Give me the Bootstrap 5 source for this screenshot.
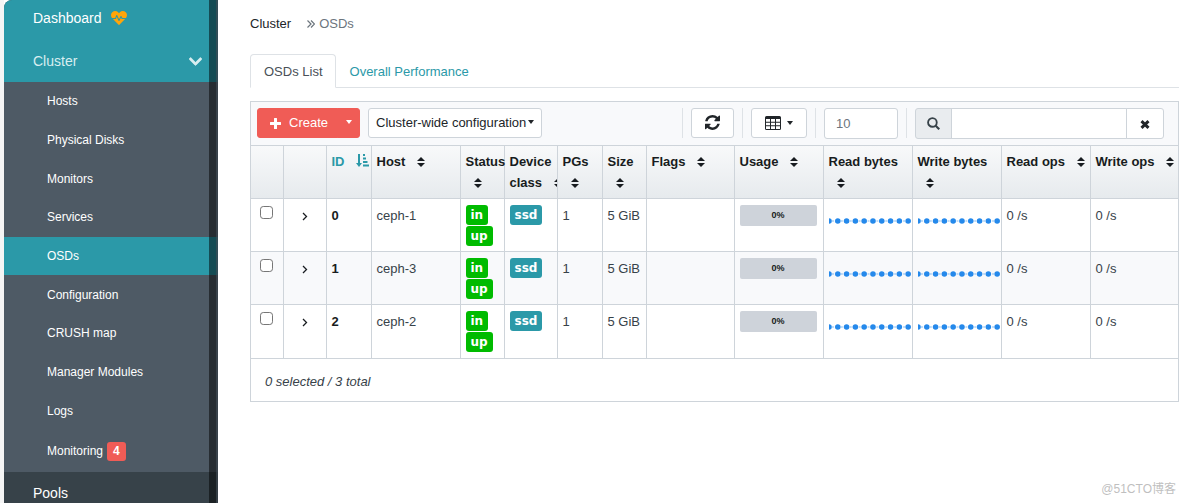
<!DOCTYPE html>
<html lang="en">
<head>
<meta charset="utf-8">
<meta name="viewport" content="width=device-width, initial-scale=1">
<title>OSDs</title>
<link href="https://cdn.jsdelivr.net/npm/bootstrap@5.3.0/dist/css/bootstrap.min.css" rel="stylesheet">
<style>
:root { --teal: #2b99a8; --line: #ced4da; --slate: #4e5a65; --coral: #f05c56; }
body { font: 13px/21px "Liberation Sans", Arial, sans-serif; color: #374249; background: #fff; }
a { text-decoration: none; }
svg { fill: currentColor; flex: none; }
.shell { height: 100vh; overflow: hidden; }
.gutter { flex: none; width: 4px; background: #f5f5f5; }
.side { width: 214px; background: #374249; border-top-left-radius: 8px; overflow: hidden; position: relative; }
.side a { color: #fff; }
.side-top { font-size: 14px; height: 42px; padding: 0 16px 0 29px; }
.side-first { height: 40px; padding-bottom: 4px; }
.teal-bg { background: var(--teal); }
.side .is-open { color: #d8eef0; }
.sub { display: grid; grid-template-rows: repeat(9, 1fr) 42px; height: 390px; background: var(--slate); font-size: 12px; }
.sub a { padding: 1px 0 0 43px; }
.scroll-thumb { position: absolute; top: 0; right: 0; bottom: 0; width: 9px; background: rgba(0,0,0,.5); border-right: 2px solid rgba(70,80,90,.6); }
.count { background: var(--coral); border-radius: 3px; font-size: 12px; padding: 3px 6px; line-height: 13px; }
.main { padding: 13px 5px 0 32px; min-width: 0; }
.crumb { --bs-breadcrumb-margin-bottom: 0; font-size: 13px; }
.nav-tabs { --bs-nav-tabs-border-color: #dee2e6; margin-top: 20px; }
.nav-tabs .nav-link { font-size: 13px; line-height: 21px; padding: 6px 12px 5px 13px; color: var(--teal); --bs-nav-tabs-border-radius: 4px; }
.nav-tabs .nav-link.active { color: #495057; }
.panel { margin-top: 13px; border: 1px solid var(--line); }
.tools { background: #f8f9fb; padding: 6px 14px 6px 6px; }
.tools .btn, .tools .form-control, .tools .input-group-text { font-size: 13px; line-height: 18px; border-radius: 3px; }
.tools .btn { padding: 5px 7px; }
.tools .btn-light { background: #fff; border-color: var(--line); color: #212529; }
.tools .icon-btn { height: 30px; padding: 5px 13px; }
.btn-create { --bs-btn-bg: var(--coral); --bs-btn-color: #fff; --bs-btn-border-color: var(--coral); --bs-btn-hover-bg: #e14f49; --bs-btn-hover-color: #fff; }
.tools .btn-create.main-part { padding: 5px 9px 5px 12px; border-radius: 3px 0 0 3px; }
.tools .btn-create.dropdown-toggle { border-radius: 0 3px 3px 0; padding: 5px 7px 5px 8px; }
.dropdown-toggle::after { border-top-width: 4px; border-right-width: 3px; border-left-width: 3px; margin-left: 2px; vertical-align: 3px; }
.rule { width: 1px; height: 30px; background: #dee2e6; }
.tools .form-control { border-color: var(--line); padding: 6px 11px 5px; color: #6c757d; }
.page-size { width: 74px; }
.finder { width: 249px; }
.tools .input-group-text { background: #e9ecef; border-color: var(--line); color: #374249; padding: 0 11px; }
.tools .finder .form-control { border-radius: 0; }
.tools .clear { padding: 0 13px; }
.grid-table { table-layout: fixed; width: 100%; border-collapse: collapse; }
.grid-table th, .grid-table td { height: 53px; border: 1px solid var(--line); border-width: 1px 0 0 1px; padding: 5px 0 5px 5px; vertical-align: top; }
.grid-table tbody th, .grid-table tbody td { padding: 6px 0 4px 5px; }
.grid-table tr > :first-child { border-left: 0; }
.grid-table thead tr { background: linear-gradient(#f8f9fa, #e6eaed); }
.grid-table thead th { color: #181c20; }
.grid-table tbody tr:nth-child(even) { background: #f8f9fb; }
.grid-table tbody th { color: #181c20; }
.clipped { overflow: hidden; }
.sorter { margin-left: 8px; vertical-align: -1px; }
.grid-table thead .by-id { color: var(--teal); }
.tick { width: 13px; height: 13px; margin: 1px 0 0 4px; display: block; border: 1px solid #767676; border-radius: 3px; background-color: #fff; font-size: 13px; }
.open-row { border: 0; background: none; padding: 0 13px; color: #181c20; line-height: 21px; }
.tag { display: inline-block; vertical-align: top; font: bold 12px/20px "DejaVu Sans", sans-serif; color: #fff; padding: 0 5px; border-radius: 3px; background: #00bb00; }
.tag-teal { background: var(--teal); }
.gauge { height: 21px; margin-right: 6px; background: #ced3da; border-radius: 2px; color: #181c20; font-size: 9px; font-weight: bold; }
.spark { display: block; width: 100%; margin-top: 12px; color: #2589eb; }
.total { border-top: 1px solid var(--line); padding: 12px 14px 9px; font-style: italic; }
.stamp { position: absolute; right: 8px; bottom: 4px; font: 12px/20px "Liberation Sans", "Noto Sans CJK SC", sans-serif; color: #bfbfbf; }
</style>
</head>
<body>
<svg width="0" height="0" class="d-none" aria-hidden="true">
  <symbol id="sort" viewBox="0 0 8 10"><path d="M4 0 8 4H0zM0 6h8L4 10z"/></symbol>
  <symbol id="next" viewBox="0 0 6 9"><path d="M1 1l3.5 3.5L1 8" fill="none" stroke="currentColor" stroke-width="1.3"/></symbol>
  <symbol id="spark" viewBox="0 0 84 8"><path d="M0 4H84" stroke="currentColor" stroke-dasharray="2 1" opacity=".6"/><path d="M0 4H84" stroke="currentColor" stroke-width="5.600" stroke-linecap="round" stroke-dasharray="0 8.900"/></symbol>
</svg>
<div class="shell d-flex">
  <div class="gutter"></div>
  <nav class="side flex-shrink-0" aria-label="Main">
    <a href="#" class="side-top side-first teal-bg d-flex align-items-center">Dashboard
      <svg class="ms-2" width="18" height="16" viewBox="0 0 512 512" style="color:#ffa50a"><path d="M320.2 243.800l-49.700 99.400c-6 12.100-23.400 11.700-28.900-.6l-56.900-126.300-30 71.700H60.600l182.500 186.500c7.100 7.300 18.600 7.300 25.700 0L451.400 288H342.300l-22.100-44.200zM473.700 73.900l-2.400-2.500c-51.500-52.600-135.800-52.600-187.400 0L256 100l-27.900-28.500c-51.500-52.700-135.900-52.700-187.400 0l-2.400 2.400C-10.400 123.700-12.500 203 31 256h102.400l35.900-86.200c5.400-12.900 23.600-13.200 29.400-.4l58.200 129.300 49-97.900c5.900-11.800 22.700-11.800 28.600 0l27.600 55.200H481c43.500-53 41.400-132.300-7.300-182.100z"/></svg></a>
    <a href="#" class="side-top teal-bg is-open d-flex align-items-center justify-content-between">Cluster
      <svg width="13" height="15" viewBox="0 0 448 512"><path d="M207 381.500L12.700 187.100c-9.400-9.400-9.400-24.600 0-33.900l22.700-22.700c9.400-9.400 24.500-9.400 33.900 0L224 284.500l154.700-154c9.400-9.400 24.600-9.400 33.900 0l22.700 22.700c9.400 9.400 9.400 24.600 0 33.900L241 381.500c-9.400 9.400-24.600 9.400-34 0z" stroke="currentColor" stroke-width="22"/></svg></a>
    <div class="sub">
      <a href="#" class="d-flex align-items-center">Hosts</a>
      <a href="#" class="d-flex align-items-center">Physical Disks</a>
      <a href="#" class="d-flex align-items-center">Monitors</a>
      <a href="#" class="d-flex align-items-center">Services</a>
      <a href="#" class="d-flex align-items-center teal-bg" aria-current="page">OSDs</a>
      <a href="#" class="d-flex align-items-center">Configuration</a>
      <a href="#" class="d-flex align-items-center">CRUSH map</a>
      <a href="#" class="d-flex align-items-center">Manager Modules</a>
      <a href="#" class="d-flex align-items-center">Logs</a>
      <a href="#" class="d-flex align-items-center">Monitoring <span class="badge count ms-1">4</span></a>
    </div>
    <a href="#" class="side-top d-flex align-items-center">Pools</a>
    <div class="scroll-thumb"></div>
  </nav>

  <main class="main flex-grow-1">
    <nav aria-label="breadcrumb">
      <div class="breadcrumb crumb align-items-center">
        <a href="#" class="text-dark">Cluster</a>
        <svg class="ms-3 me-1 text-secondary" width="8" height="8" viewBox="0 0 8 8"><path d="M.5.500 4 4 .5 7.500M4 .500 7.500 4 4 7.500" fill="none" stroke="currentColor" stroke-width="1.2"/></svg>
        <span class="text-secondary" aria-current="page">OSDs</span>
      </div>
    </nav>
    <ul class="nav nav-tabs">
      <li class="nav-item"><a class="nav-link active" href="#">OSDs List</a></li>
      <li class="nav-item"><a class="nav-link" href="#">Overall Performance</a></li>
    </ul>

    <section class="panel">
      <div class="tools d-flex align-items-start">
        <div class="btn-group">
          <button type="button" class="btn btn-create main-part d-flex align-items-center"><svg class="me-2" width="11" height="11" viewBox="0 0 11 11"><path d="M4.500 0h2q.5 0 .5.500V4h3.500q.5 0 .5.500v2q0 .5-.5.500H7v3.500q0 .5-.5.500h-2q-.5 0-.5-.5V7H.5Q0 7 0 6.500v-2Q0 4 .5 4H4V.500Q4 0 4.500 0z"/></svg>Create</button>
          <button type="button" class="btn btn-create dropdown-toggle dropdown-toggle-split" aria-label="More create actions"></button>
        </div>
        <button type="button" class="btn btn-light dropdown-toggle ms-2">Cluster-wide configuration</button>
        <div class="d-flex align-items-start gap-2 ms-auto">
          <span class="rule"></span>
          <button type="button" class="btn btn-light icon-btn d-flex align-items-center" aria-label="Refresh"><svg width="15" height="18" viewBox="0 0 1536 1664"><path d="M1511 928q0 5-1 7-64 268-268 434.500t-478 166.500q-146 0-282.500-55t-243.500-157l-129 129q-19 19-45 19t-45-19-19-45v-448q0-26 19-45t45-19h448q26 0 45 19t19 45-19 45l-137 137q71 66 161 102t187 36q134 0 250-65t186-179q11-17 53-117 8-23 30-23h192q13 0 22.500 9.500t9.500 22.500zm25-800v448q0 26-19 45t-45 19h-448q-26 0-45-19t-19-45 19-45l138-138q-148-137-349-137-134 0-250 65t-186 179q-11 17-53 117-8 23-30 23h-199q-13 0-22.500-9.500t-9.500-22.500v-7q65-268 270-434.500t480-166.500q146 0 284 55.500t245 156.500l130-129q19-19 45-19t45 19 19 45z"/></svg></button>
          <span class="rule"></span>
          <button type="button" class="btn btn-light icon-btn dropdown-toggle d-flex align-items-center" aria-label="Columns"><svg class="me-1" width="16" height="14" viewBox="0 0 16 14"><path fill-rule="evenodd" d="M1.500 0h13Q16 0 16 1.500v11Q16 14 14.500 14h-13Q0 14 0 12.500v-11Q0 0 1.500 0zM1 3v2.700h4V3zM6 3v2.700h4V3zM11 3v2.700h4V3zM1 6.700v2.600h4V6.700zM6 6.700v2.600h4V6.700zM11 6.700v2.600h4V6.700zM1 10.300V13h4v-2.700zM6 10.300V13h4v-2.700zM11 10.300V13h4v-2.700z"/></svg></button>
          <span class="rule"></span>
          <input type="text" class="form-control page-size" value="10" aria-label="Rows per page">
          <span class="rule"></span>
          <div class="input-group finder flex-nowrap">
            <label class="input-group-text" for="find" aria-label="Search"><svg width="13" height="13" viewBox="0 0 12 12"><g fill="none" stroke="currentColor" stroke-width="1.700"><circle cx="5" cy="5" r="4"/><path d="M8 8l3.300 3.300" stroke-width="2"/></g></svg></label>
            <input type="text" id="find" class="form-control">
            <button type="button" class="btn btn-light clear" aria-label="Clear search"><svg width="10" height="9" viewBox="0 0 10 9"><path d="M1.500 1.200l7 6.600M8.500 1.200l-7 6.600" stroke="currentColor" stroke-width="3"/></svg></button>
          </div>
        </div>
      </div>

      <table class="grid-table">
        <colgroup>
          <col style="width:32px"><col style="width:43px"><col style="width:45px"><col style="width:89px"><col style="width:44px"><col style="width:53px"><col style="width:45px"><col style="width:44px"><col style="width:88px"><col style="width:89px"><col style="width:89px"><col style="width:89px"><col style="width:89px"><col style="width:88px">
        </colgroup>
        <thead>
          <tr>
            <th></th><th></th>
            <th class="by-id text-nowrap" scope="col">ID <svg class="sorter" width="13" height="13" viewBox="0 0 13 13"><path d="M2 0h2v9h2L3 13 0 9h2zM7 0h2v2H7zM7 3.500h3v2H7zM7 7h4.500v2H7zM7 10.500h6v2H7z"/></svg></th>
            <th scope="col">Host <svg class="sorter" width="8" height="10"><use href="#sort"/></svg></th>
            <th scope="col">Status <svg class="sorter" width="8" height="10"><use href="#sort"/></svg></th>
            <th scope="col" class="clipped">Device <span class="text-nowrap">class <svg class="sorter" width="8" height="10"><use href="#sort"/></svg></span></th>
            <th scope="col">PGs <svg class="sorter" width="8" height="10"><use href="#sort"/></svg></th>
            <th scope="col">Size <svg class="sorter" width="8" height="10"><use href="#sort"/></svg></th>
            <th scope="col">Flags <svg class="sorter" width="8" height="10"><use href="#sort"/></svg></th>
            <th scope="col">Usage <svg class="sorter" width="8" height="10"><use href="#sort"/></svg></th>
            <th scope="col">Read bytes <svg class="sorter" width="8" height="10"><use href="#sort"/></svg></th>
            <th scope="col">Write bytes <svg class="sorter" width="8" height="10"><use href="#sort"/></svg></th>
            <th scope="col">Read ops <svg class="sorter" width="8" height="10"><use href="#sort"/></svg></th>
            <th scope="col">Write ops <svg class="sorter" width="8" height="10"><use href="#sort"/></svg></th>
          </tr>
        </thead>
        <tbody>
          <tr>
            <td><input type="checkbox" class="form-check-input tick" aria-label="Select OSD 0"></td>
            <td><button type="button" class="open-row" aria-label="Expand OSD 0"><svg width="6" height="9"><use href="#next"/></svg></button></td>
            <th scope="row">0</th><td>ceph-1</td>
            <td><span class="tag">in</span> <span class="tag">up</span></td>
            <td><span class="tag tag-teal">ssd</span></td>
            <td>1</td><td>5 GiB</td><td></td>
            <td><div class="progress gauge justify-content-center align-items-center">0%</div></td>
            <td><svg class="spark" height="8"><use href="#spark"/></svg></td>
            <td><svg class="spark" height="8"><use href="#spark"/></svg></td>
            <td>0 /s</td><td>0 /s</td>
          </tr>
          <tr>
            <td><input type="checkbox" class="form-check-input tick" aria-label="Select OSD 1"></td>
            <td><button type="button" class="open-row" aria-label="Expand OSD 1"><svg width="6" height="9"><use href="#next"/></svg></button></td>
            <th scope="row">1</th><td>ceph-3</td>
            <td><span class="tag">in</span> <span class="tag">up</span></td>
            <td><span class="tag tag-teal">ssd</span></td>
            <td>1</td><td>5 GiB</td><td></td>
            <td><div class="progress gauge justify-content-center align-items-center">0%</div></td>
            <td><svg class="spark" height="8"><use href="#spark"/></svg></td>
            <td><svg class="spark" height="8"><use href="#spark"/></svg></td>
            <td>0 /s</td><td>0 /s</td>
          </tr>
          <tr>
            <td><input type="checkbox" class="form-check-input tick" aria-label="Select OSD 2"></td>
            <td><button type="button" class="open-row" aria-label="Expand OSD 2"><svg width="6" height="9"><use href="#next"/></svg></button></td>
            <th scope="row">2</th><td>ceph-2</td>
            <td><span class="tag">in</span> <span class="tag">up</span></td>
            <td><span class="tag tag-teal">ssd</span></td>
            <td>1</td><td>5 GiB</td><td></td>
            <td><div class="progress gauge justify-content-center align-items-center">0%</div></td>
            <td><svg class="spark" height="8"><use href="#spark"/></svg></td>
            <td><svg class="spark" height="8"><use href="#spark"/></svg></td>
            <td>0 /s</td><td>0 /s</td>
          </tr>
        </tbody>
      </table>
      <div class="total">0 selected / 3 total</div>
    </section>
  </main>
</div>
<div class="stamp">@51CTO博客</div>
<script src="https://cdn.jsdelivr.net/npm/bootstrap@5.3.0/dist/js/bootstrap.bundle.min.js"></script>
</body>
</html>
